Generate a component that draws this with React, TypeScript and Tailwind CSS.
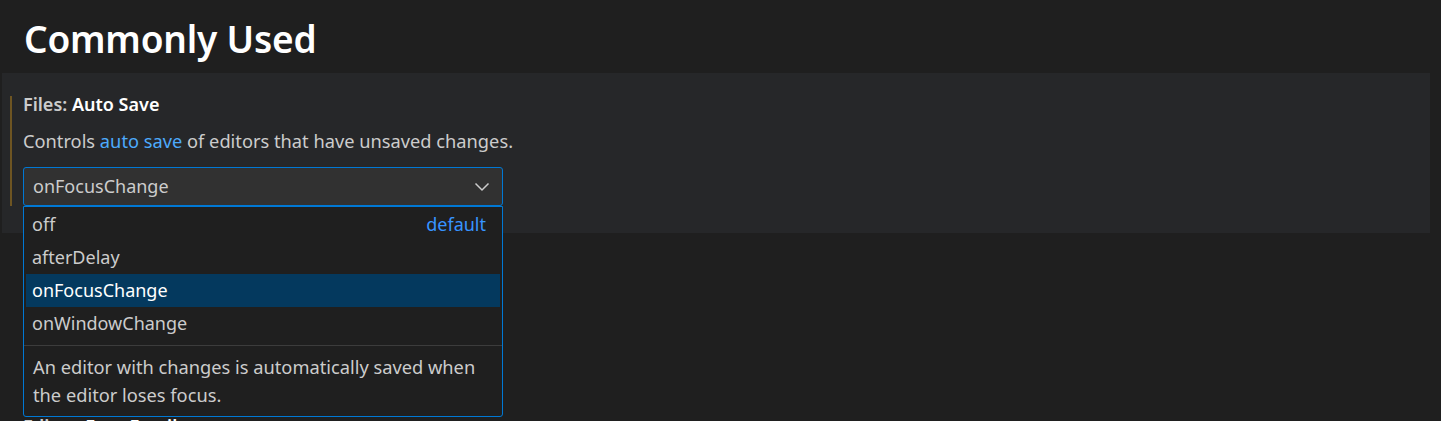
import React from "react";

const font = { fontFamily: '"Noto Sans", "Open Sans", sans-serif' };

export default function App() {
  return (
    <div
      className="w-[1441px] h-[421px] bg-[#1f1f1f] overflow-hidden relative text-[#cccccc]"
      style={font}
    >
      <div className="h-[73px] pl-[24px] pt-[14px]">
        <h1 className="text-[37px] leading-[50px] font-semibold text-white tracking-[-0.2px]">
          Commonly Used
        </h1>
      </div>
      <div className="ml-[2px] w-[1428px] h-[160px] bg-[#262729] relative flex">
        <div className="ml-[8px] mt-[23px] w-[2px] h-[110px] bg-[#6e5522]" />
        <div className="ml-[11px] pt-[19px] flex flex-col">
          <div className="text-[18px] leading-[24px] font-semibold">
            <span className="text-[#cccccc]">Files: </span>
            <span className="text-white">Auto Save</span>
          </div>
          <div className="mt-[12px] text-[18.25px] leading-[26px] text-[#cccccc]">
            Controls <span className="text-[#4daafc]">auto save</span> of editors that have unsaved changes.
          </div>
          <div className="relative mt-[13px] w-[480px]">
            <div className="h-[39px] bg-[#313131] border border-[#0078d4] rounded-[3px] flex items-center justify-between pl-[9px] pr-[12px] text-[18px] text-[#cccccc]">
              <span>onFocusChange</span>
              <svg width="16" height="10" viewBox="0 0 16 10" fill="none">
                <path d="M1.5 1.5 L8 8 L14.5 1.5" stroke="#cccccc" strokeWidth="1.5" />
              </svg>
            </div>
            <div className="absolute left-0 top-[39px] w-[480px] bg-[#1f1f1f] border border-[#0078d4] rounded-b-[3px] px-[2px] pt-[1px] z-10">
              <div className="h-[33px] flex items-center justify-between pl-[6px] pr-[14px] text-[18px]">
                <span>off</span>
                <span className="text-[#3794ff]">default</span>
              </div>
              <div className="h-[33px] flex items-center pl-[6px] text-[18px]">afterDelay</div>
              <div className="h-[33px] flex items-center pl-[6px] text-[18px] bg-[#04395e] text-white">onFocusChange</div>
              <div className="h-[33px] flex items-center pl-[6px] text-[18px]">onWindowChange</div>
              <div className="mt-[5px] -mx-[2px] h-px bg-[#3c3c3c]" />
              <div className="pl-[7px] pr-[20px] pt-[7px] pb-[7px] text-[18.25px] leading-[28px]">
                An editor with changes is automatically saved when the editor loses focus.
              </div>
            </div>
          </div>
        </div>
      </div>
      <div className="pl-[23px] mt-[181px] text-[18px] leading-[24px] font-semibold">
        <span className="text-[#cccccc]">Editor: </span>
        <span className="text-white">Font Family</span>
      </div>
    </div>
  );
}
